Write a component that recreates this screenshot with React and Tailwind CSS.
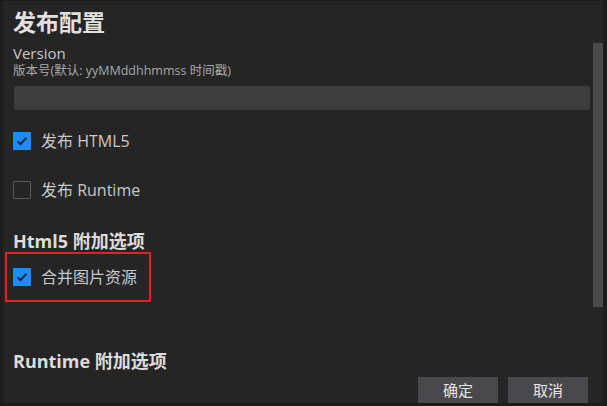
import React, { useState } from 'react';

function Check({ checked, onChange, label }) {
  return (
    <label className="h-[18px] flex items-center gap-[10px] cursor-pointer select-none" onClick={onChange}>
      <span
        className={`w-[18px] h-[18px] shrink-0 rounded-[1px] flex items-center justify-center ${
          checked ? 'bg-[#1e8cf4]' : 'border border-[#5a5a5a]'
        }`}
      >
        {checked && (
          <svg width="12" height="10" viewBox="0 0 12 10" fill="none">
            <path d="M1.5 5.2 L4.5 8 L10.5 1.8" stroke="#1c2a3a" strokeWidth="2" />
          </svg>
        )}
      </span>
      <span className="text-[16px] leading-[18px] text-[#c8c8c8]">{label}</span>
    </label>
  );
}

export default function App() {
  const [h5, setH5] = useState(true);
  const [rt, setRt] = useState(false);
  const [merge, setMerge] = useState(true);

  return (
    <div
      className="w-[607px] h-[406px] bg-[#1c1c1c] pt-[1px] pl-[3px] overflow-hidden"
      style={{ fontFamily: '"Segoe UI", "Open Sans", "Noto Sans CJK SC", sans-serif' }}
    >
      <div className="w-[600px] h-[402px] bg-[#252525] flex">
        {/* Content */}
        <div className="flex-1 flex flex-col pl-[10px] pr-[3px] min-w-0">
          <h1 className="h-[23px] text-[23px] font-bold text-[#e0e0e0] leading-none mt-[10px]">发布配置</h1>
          <p className="h-[15px] text-[15px] text-[#c8c8c8] leading-none mt-[12px]">Version</p>
          <p className="h-[13px] text-[12.5px] text-[#a8a8a8] leading-none mt-[4px]">版本号(默认: yyMMddhhmmss 时间戳)</p>
          <div className="h-[24px] shrink-0 bg-[#3d3d3d] rounded-[2px] mt-[8px] ml-[1px]" />

          <div className="mt-[22px]">
            <Check checked={h5} onChange={() => setH5(!h5)} label="发布 HTML5" />
          </div>
          <div className="mt-[31px]">
            <Check checked={rt} onChange={() => setRt(!rt)} label="发布 Runtime" />
          </div>

          <h2 className="h-[18px] text-[18px] font-bold text-[#dcdcdc] leading-none mt-[33px]">Html5 附加选项</h2>
          <div className="shrink-0 mt-[2px] -ml-[8px] w-[146px] h-[50px] border-2 border-[#e81c24] flex items-center pl-[6px]">
            <Check checked={merge} onChange={() => setMerge(!merge)} label="合并图片资源" />
          </div>

          <h2 className="h-[18px] text-[18px] font-bold text-[#dcdcdc] leading-none mt-[50px]">Runtime 附加选项</h2>

          <div className="flex justify-end gap-[10px] mt-auto pr-[2px]">
            <button className="w-[80px] h-[26px] bg-[#48484d] text-[15px] text-[#e6e6e6]">确定</button>
            <button className="w-[80px] h-[26px] bg-[#48484d] text-[15px] text-[#e6e6e6]">取消</button>
          </div>
        </div>
        {/* Scrollbar */}
        <div className="w-[10px] pt-[42px]">
          <div className="h-[264px] bg-[#4a4a4a]" />
        </div>
      </div>
    </div>
  );
}
